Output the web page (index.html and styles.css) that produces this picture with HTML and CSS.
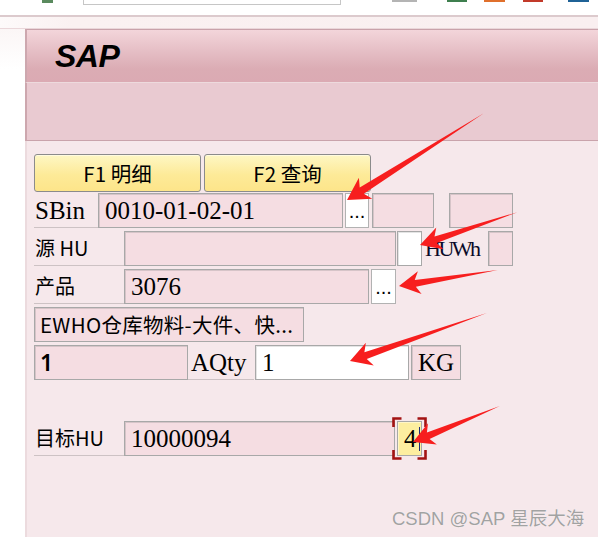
FILE: index.html
```html
<!DOCTYPE html>
<html lang="zh">
<head>
<meta charset="utf-8">
<title>SAP</title>
<link rel="stylesheet" href="styles.css">
</head>
<body>
<div class="top">
  <span class="stub"></span>
  <div class="search"></div>
  <span class="ico ico-grey"></span>
  <span class="ico ico-green"></span>
  <span class="ico ico-orange"></span>
  <span class="ico ico-red"></span>
  <span class="ico ico-blue"></span>
</div>
<div class="rule"></div>
<div class="strip"></div>
<div class="desk">
  <div class="gutter"></div>
  <div class="frame">
    <div class="titlebar"><span class="logo">SAP</span></div>
    <div class="toolbar"></div>
    <div class="content">
      <div class="btnrow">
        <button class="fkey">F1 明细</button>
        <button class="fkey">F2 查询</button>
      </div>

      <div class="row">
        <div class="lbl serif w64">SBin</div>
        <div class="f serif w245">0010-01-02-01</div>
        <div class="dots w24 ml2">...</div>
        <div class="f w62 ml3"></div>
        <div class="f w64 ml15"></div>
      </div>

      <div class="row">
        <div class="lbl sans w90">源 HU</div>
        <div class="f w272"></div>
        <div class="f white w25 ml1"></div>
        <div class="txt serif tight w66">HUWh</div>
        <div class="f w25"></div>
      </div>

      <div class="row">
        <div class="lbl sans w90">产品</div>
        <div class="f serif w245">3076</div>
        <div class="dots w25 ml2">...</div>
      </div>

      <div class="row">
        <div class="f sans wide w270">EWHO仓库物料-大件、快...</div>
      </div>

      <div class="row">
        <div class="f latin strong w154">1</div>
        <div class="lbl serif w66 pl3">AQty</div>
        <div class="f serif white w154 ml1">1</div>
        <div class="f serif w50 ml2">KG</div>
      </div>

      <div class="row"></div>

      <div class="row">
        <div class="lbl sans w90">目标HU</div>
        <div class="f serif w271">10000094</div>
        <div class="f serif yellow w25 ml2">4<span class="caret"></span>
          <svg class="focus" width="35" height="43" viewBox="0 0 35 43">
            <path d="M1.5 10V1.5H9.5M25.5 1.5H33.5V10M1.5 33V41.5H9.5M25.5 41.5H33.5V33" fill="none" stroke="#a31212" stroke-width="2.6"/>
          </svg>
        </div>
      </div>
    </div>
  </div>
</div>
<div class="watermark">CSDN @SAP 星辰大海</div>
<svg class="arrows" width="598" height="537" viewBox="0 0 598 537">
  <g fill="#f71e1e">
    <path transform="translate(347 200) rotate(147.6)" d="M0 0L-22 -12.5L-17.5 -3.8L-162 0L-17.5 3.8L-22 12.5Z"/>
    <path transform="translate(420 245) rotate(161.4)" d="M0 0L-21 -11.5L-16.5 -3.5L-103 0L-16.5 3.5L-21 11.5Z"/>
    <path transform="translate(399 286) rotate(170.8)" d="M0 0L-21 -11.5L-16.5 -3.5L-100 0L-16.5 3.5L-21 11.5Z"/>
    <path transform="translate(350 361) rotate(160.7)" d="M0 0L-21 -12L-16.5 -3.6L-145 0L-16.5 3.6L-21 12Z"/>
    <path transform="translate(413 442) rotate(157.5)" d="M0 0L-21 -11.5L-16.5 -3.5L-94 0L-16.5 3.5L-21 11.5Z"/>
  </g>
</svg>
</body>
</html>
```
FILE: styles.css
```css
* { box-sizing: border-box; }
html, body { margin: 0; padding: 0; }
body {
  width: 598px;
  height: 537px;
  overflow: hidden;
  background: #ffffff;
  position: relative;
  font-family: "Noto Sans CJK SC", "Noto Sans", sans-serif;
}

/* top browser strip */
.top {
  height: 15px;
  display: flex;
  align-items: flex-start;
  background: #fff;
}
.stub { width: 11px; height: 3px; margin-left: 42px; background: #5a8a5e; }
.search {
  width: 258px; height: 5px; margin-left: 30px;
  border: 1px solid #c6c6c6; border-top: none; background: #fff;
}
.ico { height: 2px; }
.ico-grey { width: 25px; margin-left: 51px; background: #b4b4b4; }
.ico-green { width: 20px; margin-left: 30px; background: #3f7f4f; }
.ico-orange { width: 21px; margin-left: 17px; background: #e0702c; }
.ico-red { width: 20px; margin-left: 18px; background: #c23a2a; }
.ico-blue { width: 21px; margin-left: 25px; background: #1f6296; }

.rule { height: 2px; background: #dccacd; }
.strip {
  height: 12px;
  background: linear-gradient(90deg, #fdfafa, #faf1f1 12%, #f9eff0);
  border-bottom: 1px solid #ead7da;
}

/* window */
.desk { display: flex; height: 508px; }
.gutter { width: 25px; background: linear-gradient(#fbf6f6, #ffffff 40px); }
.frame { flex: 1; display: flex; flex-direction: column; }
.titlebar {
  height: 54px;
  border-top: 1px solid #c9a2aa;
  border-bottom: 1px solid #eddadd;
  border-left: 2px solid #cda7ae;
  background: linear-gradient(#f3d5da, #e4bcc3 45%, #dbacb4 75%, #dbaab3);
  display: flex;
  align-items: center;
  padding-left: 28px;
}
.logo {
  font-family: "Liberation Sans", Arial, sans-serif;
  font-weight: bold;
  font-style: italic;
  font-size: 32px;
  line-height: 1;
  color: #000;
  letter-spacing: -0.5px;
}
.toolbar {
  height: 58px;
  background: #e9cad1;
  border-left: 2px solid #cda7ae;
  border-bottom: 1px solid #c9a3ab;
}
.content {
  flex: 1;
  background: #f6e8eb;
  border-left: 2px solid #ecdbde;
  padding: 13px 0 0 7px;
}

/* function keys */
.btnrow { display: flex; gap: 3px; height: 38px; margin-bottom: 1px; }
.fkey {
  width: 167px;
  height: 38px;
  border: 1px solid #8b8b8b;
  border-radius: 3px;
  background: linear-gradient(#fef7c4, #fdea98 55%, #fde58a);
  box-shadow: inset 0 1px 0 #fffbe0;
  font-family: "Noto Sans CJK SC", "Noto Sans", sans-serif;
  font-size: 20.5px;
  line-height: 1;
  color: #000;
  padding: 0;
  margin: 0;
}

/* rows */
.row { display: flex; height: 35px; margin-bottom: 3px; }
.serif { font-family: "Liberation Serif", "Noto Sans CJK SC", serif; font-size: 25px; }
.sans { font-family: "Noto Sans CJK SC", "Noto Sans", sans-serif; font-size: 20px; }
.latin { font-family: "Noto Sans", "Liberation Sans", sans-serif; font-size: 23px; }
.wide { font-size: 20.5px; letter-spacing: 0.3px; }
.strong { font-weight: 600; }
.lbl {
  display: flex;
  align-items: center;
  border-bottom: 1px solid #cdc2c4;
  padding-left: 1px;
  line-height: 1;
  color: #000;
}
.txt { display: flex; align-items: center; line-height: 1; color: #0a0a28; padding-left: 3px; }
.tight { letter-spacing: -2.5px; font-size: 22px; }
.f {
  display: flex;
  align-items: center;
  height: 35px;
  border: 1px solid #a8a8a8;
  box-shadow: inset 1px 1px 0 #d6c4c8;
  background: #f5dde2;
  padding-left: 6px;
  line-height: 1;
  color: #000;
  white-space: nowrap;
  overflow: visible;
}
.f.sans, .f.latin { padding-left: 5px; }
.white { background: #ffffff; box-shadow: inset 1px 1px 0 #e4e4e4; }
.yellow { background: #fdeea0; position: relative; box-shadow: inset 1px 1px 0 #fff6c8; }
.caret { display: inline-block; width: 1px; height: 24px; background: #1d2c7a; margin-left: 2px; }
.focus { position: absolute; left: -6px; top: -5px; }
.dots {
  height: 35px;
  background: #ffffff;
  border: 1px solid #b2b2b2;
  display: flex;
  justify-content: center;
  align-items: flex-end;
  padding-bottom: 6px;
  font-family: "Liberation Sans", Arial, sans-serif;
  font-size: 20px;
  line-height: 1;
  color: #000;
}

.w24 { width: 24px; } .w25 { width: 25px; } .w50 { width: 50px; }
.w62 { width: 62px; } .w64 { width: 64px; } .w66 { width: 66px; }
.w90 { width: 90px; } .w154 { width: 154px; } .w245 { width: 245px; }
.w270 { width: 270px; } .w271 { width: 271px; } .w272 { width: 272px; }
.ml1 { margin-left: 1px; } .ml2 { margin-left: 2px; } .ml3 { margin-left: 3px; }
.ml15 { margin-left: 15px; } .pl3 { padding-left: 3px; }

.watermark {
  position: absolute;
  left: 392px;
  top: 506px;
  font-family: "Liberation Sans", "Noto Sans CJK SC", sans-serif;
  font-size: 18.5px;
  line-height: 26px;
  color: #a2a2a2;
  text-shadow: 0 0 1px #ffffff;
  white-space: nowrap;
}
.arrows { position: absolute; left: 0; top: 0; pointer-events: none; }
```
